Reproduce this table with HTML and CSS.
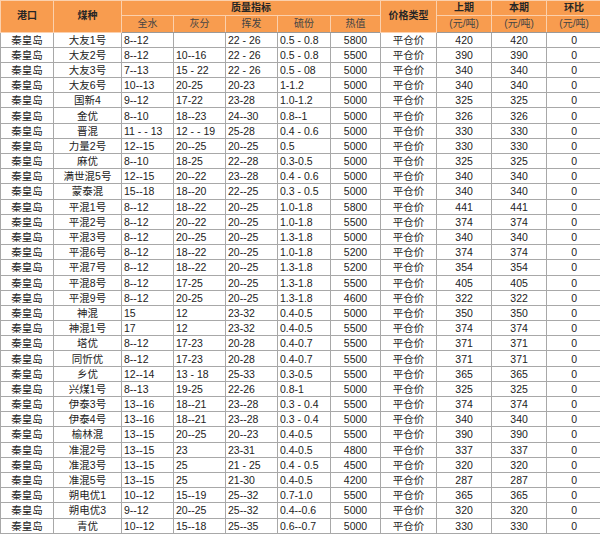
FILE: index.html
```html
<!DOCTYPE html>
<html lang="zh-CN">
<head>
<meta charset="utf-8">
<title>秦皇岛煤价</title>
<link rel="stylesheet" href="styles.css">
</head>
<body>
<table class="coal">
<colgroup>
<col class="c-port"><col class="c-kind"><col class="c-q"><col class="c-q"><col class="c-q"><col class="c-s"><col class="c-heat"><col class="c-type"><col class="c-p"><col class="c-p"><col class="c-p">
</colgroup>
<thead>
<tr class="h1">
<th rowspan="2">港口</th><th rowspan="2">煤种</th><th colspan="5">质量指标</th><th rowspan="2">价格类型</th><th>上期</th><th>本期</th><th>环比</th>
</tr>
<tr class="h2">
<th>全水</th><th>灰分</th><th>挥发</th><th>硫份</th><th>热值</th><th>(元/吨)</th><th>(元/吨)</th><th>(元/吨)</th>
</tr>
</thead>
<tbody>
<tr><td>秦皇岛</td><td>大友1号</td><td class="l">8--12</td><td class="l"></td><td class="l">22 - 26</td><td class="l">0.5 - 0.8</td><td>5800</td><td>平仓价</td><td>420</td><td>420</td><td>0</td></tr>
<tr><td>秦皇岛</td><td>大友2号</td><td class="l">8--12</td><td class="l">10--16</td><td class="l">22 - 26</td><td class="l">0.5 - 0.8</td><td>5500</td><td>平仓价</td><td>390</td><td>390</td><td>0</td></tr>
<tr><td>秦皇岛</td><td>大友3号</td><td class="l">7--13</td><td class="l">15 - 22</td><td class="l">22 - 26</td><td class="l">0.5 - 08</td><td>5000</td><td>平仓价</td><td>340</td><td>340</td><td>0</td></tr>
<tr><td>秦皇岛</td><td>大友6号</td><td class="l">10--13</td><td class="l">20-25</td><td class="l">20-23</td><td class="l">1-1.2</td><td>5000</td><td>平仓价</td><td>340</td><td>340</td><td>0</td></tr>
<tr><td>秦皇岛</td><td>国新4</td><td class="l">9--12</td><td class="l">17-22</td><td class="l">23-28</td><td class="l">1.0-1.2</td><td>5000</td><td>平仓价</td><td>325</td><td>325</td><td>0</td></tr>
<tr><td>秦皇岛</td><td>金优</td><td class="l">8--10</td><td class="l">18--23</td><td class="l">24--30</td><td class="l">0.8--1</td><td>5000</td><td>平仓价</td><td>326</td><td>326</td><td>0</td></tr>
<tr><td>秦皇岛</td><td>晋混</td><td class="l">11 - - 13</td><td class="l">12 - - 19</td><td class="l">25-28</td><td class="l">0.4 - 0.6</td><td>5000</td><td>平仓价</td><td>330</td><td>330</td><td>0</td></tr>
<tr><td>秦皇岛</td><td>力量2号</td><td class="l">12--15</td><td class="l">20--25</td><td class="l">20--25</td><td class="l">0.5</td><td>5000</td><td>平仓价</td><td>330</td><td>330</td><td>0</td></tr>
<tr><td>秦皇岛</td><td>麻优</td><td class="l">8--10</td><td class="l">18-25</td><td class="l">22--28</td><td class="l">0.3-0.5</td><td>5000</td><td>平仓价</td><td>325</td><td>325</td><td>0</td></tr>
<tr><td>秦皇岛</td><td>满世混5号</td><td class="l">12--15</td><td class="l">20--22</td><td class="l">23--28</td><td class="l">0.4 - 0.6</td><td>5000</td><td>平仓价</td><td>340</td><td>340</td><td>0</td></tr>
<tr><td>秦皇岛</td><td>蒙泰混</td><td class="l">15--18</td><td class="l">18--20</td><td class="l">22--25</td><td class="l">0.3 - 0.5</td><td>5000</td><td>平仓价</td><td>340</td><td>340</td><td>0</td></tr>
<tr><td>秦皇岛</td><td>平混1号</td><td class="l">8--12</td><td class="l">18--22</td><td class="l">20--25</td><td class="l">1.0-1.8</td><td>5800</td><td>平仓价</td><td>441</td><td>441</td><td>0</td></tr>
<tr><td>秦皇岛</td><td>平混2号</td><td class="l">8--12</td><td class="l">20--22</td><td class="l">20--25</td><td class="l">1.0-1.8</td><td>5500</td><td>平仓价</td><td>374</td><td>374</td><td>0</td></tr>
<tr><td>秦皇岛</td><td>平混3号</td><td class="l">8--12</td><td class="l">20--25</td><td class="l">20--25</td><td class="l">1.3-1.8</td><td>5000</td><td>平仓价</td><td>340</td><td>340</td><td>0</td></tr>
<tr><td>秦皇岛</td><td>平混6号</td><td class="l">8--12</td><td class="l">18--22</td><td class="l">20--25</td><td class="l">1.0-1.8</td><td>5200</td><td>平仓价</td><td>374</td><td>374</td><td>0</td></tr>
<tr><td>秦皇岛</td><td>平混7号</td><td class="l">8--12</td><td class="l">18--22</td><td class="l">20--25</td><td class="l">1.3-1.8</td><td>5200</td><td>平仓价</td><td>354</td><td>354</td><td>0</td></tr>
<tr><td>秦皇岛</td><td>平混8号</td><td class="l">8--12</td><td class="l">17-25</td><td class="l">20--25</td><td class="l">1.3-1.8</td><td>5500</td><td>平仓价</td><td>405</td><td>405</td><td>0</td></tr>
<tr><td>秦皇岛</td><td>平混9号</td><td class="l">8--12</td><td class="l">20-25</td><td class="l">20--25</td><td class="l">1.3-1.8</td><td>4600</td><td>平仓价</td><td>322</td><td>322</td><td>0</td></tr>
<tr><td>秦皇岛</td><td>神混</td><td class="l">15</td><td class="l">12</td><td class="l">23-32</td><td class="l">0.4-0.5</td><td>5000</td><td>平仓价</td><td>350</td><td>350</td><td>0</td></tr>
<tr><td>秦皇岛</td><td>神混1号</td><td class="l">17</td><td class="l">12</td><td class="l">23-32</td><td class="l">0.4-0.5</td><td>5500</td><td>平仓价</td><td>374</td><td>374</td><td>0</td></tr>
<tr><td>秦皇岛</td><td>塔优</td><td class="l">8--12</td><td class="l">17-23</td><td class="l">20-28</td><td class="l">0.4-0.7</td><td>5500</td><td>平仓价</td><td>371</td><td>371</td><td>0</td></tr>
<tr><td>秦皇岛</td><td>同忻优</td><td class="l">8--12</td><td class="l">17-23</td><td class="l">20-28</td><td class="l">0.4-0.7</td><td>5500</td><td>平仓价</td><td>371</td><td>371</td><td>0</td></tr>
<tr><td>秦皇岛</td><td>乡优</td><td class="l">12--14</td><td class="l">13 - 18</td><td class="l">25-33</td><td class="l">0.3-0.5</td><td>5500</td><td>平仓价</td><td>365</td><td>365</td><td>0</td></tr>
<tr><td>秦皇岛</td><td>兴煤1号</td><td class="l">8--13</td><td class="l">19-25</td><td class="l">22-26</td><td class="l">0.8-1</td><td>5000</td><td>平仓价</td><td>325</td><td>325</td><td>0</td></tr>
<tr><td>秦皇岛</td><td>伊泰3号</td><td class="l">13--16</td><td class="l">18--21</td><td class="l">23--28</td><td class="l">0.3 - 0.4</td><td>5500</td><td>平仓价</td><td>374</td><td>374</td><td>0</td></tr>
<tr><td>秦皇岛</td><td>伊泰4号</td><td class="l">13--16</td><td class="l">18--21</td><td class="l">23--28</td><td class="l">0.3 - 0.4</td><td>5000</td><td>平仓价</td><td>340</td><td>340</td><td>0</td></tr>
<tr><td>秦皇岛</td><td>榆林混</td><td class="l">13--15</td><td class="l">20--25</td><td class="l">20--23</td><td class="l">0.4-0.5</td><td>5500</td><td>平仓价</td><td>390</td><td>390</td><td>0</td></tr>
<tr><td>秦皇岛</td><td>准混2号</td><td class="l">13--15</td><td class="l">23</td><td class="l">23-31</td><td class="l">0.4-0.5</td><td>4800</td><td>平仓价</td><td>337</td><td>337</td><td>0</td></tr>
<tr><td>秦皇岛</td><td>准混3号</td><td class="l">13--15</td><td class="l">25</td><td class="l">21 - 25</td><td class="l">0.4 - 0.5</td><td>4500</td><td>平仓价</td><td>320</td><td>320</td><td>0</td></tr>
<tr><td>秦皇岛</td><td>准混5号</td><td class="l">13--15</td><td class="l">25</td><td class="l">21-30</td><td class="l">0.4-0.5</td><td>4200</td><td>平仓价</td><td>287</td><td>287</td><td>0</td></tr>
<tr><td>秦皇岛</td><td>朔电优1</td><td class="l">10--12</td><td class="l">15--19</td><td class="l">25--32</td><td class="l">0.7-1.0</td><td>5500</td><td>平仓价</td><td>365</td><td>365</td><td>0</td></tr>
<tr><td>秦皇岛</td><td>朔电优3</td><td class="l">9--12</td><td class="l">20--25</td><td class="l">25--32</td><td class="l">0.4--0.6</td><td>5000</td><td>平仓价</td><td>320</td><td>320</td><td>0</td></tr>
<tr><td>秦皇岛</td><td>青优</td><td class="l">10--12</td><td class="l">15--18</td><td class="l">25--35</td><td class="l">0.6--0.7</td><td>5000</td><td>平仓价</td><td>330</td><td>330</td><td>0</td></tr>
</tbody>
</table>
</body>
</html>
```

FILE: styles.css
```css
html, body {
  margin: 0;
  padding: 0;
  background: #ffffff;
}

.coal {
  width: 600px;
  table-layout: fixed;
  border-collapse: collapse;
  font-family: "Liberation Sans", "Noto Sans CJK SC", sans-serif;
  font-size: 10.5px;
  color: #222222;
}

.c-port { width: 53px; }
.c-kind { width: 68px; }
.c-q { width: 52px; }
.c-s { width: 53px; }
.c-heat { width: 50px; }
.c-type { width: 56px; }
.c-p { width: 55px; }

.coal th {
  background: #f89c4f;
  border: 1px solid #fbd0ad;
  padding: 0;
  line-height: 12px;
  text-align: center;
  overflow: hidden;
  white-space: nowrap;
  font-size: 10px;
}

.coal .h1 th {
  font-weight: bold;
  color: #262626;
  height: 14px;
}

.coal .h2 th {
  font-weight: normal;
  color: #444444;
  height: 15.5px;
  border-bottom-color: #9a9a9a;
}

.coal td {
  border: 1px solid #a8a8a8;
  padding: 0;
  height: 14.2px;
  line-height: 12px;
  text-align: center;
  white-space: nowrap;
  overflow: hidden;
}

.coal td.l {
  text-align: left;
  padding-left: 2px;
}
```
